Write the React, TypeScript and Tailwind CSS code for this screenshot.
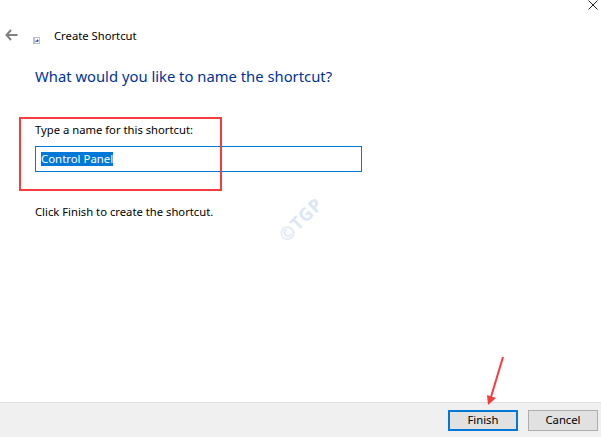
import React from 'react';

const font = "font-['Noto_Sans','Open_Sans',sans-serif]";

function ShortcutIcon() {
  return (
    <svg width="7" height="7" viewBox="0 0 7 7" className="mt-[5px]">
      <rect x="0" y="0" width="7" height="7" fill="#b8c2d2" />
      <rect x="2" y="1" width="4" height="5" fill="#ffffff" />
      <path d="M2.5 5.5 L2.5 3.5 L4 3.5 L4 2 L6 4 L4 5 L3.5 4.5 Z" fill="#1f4f9e" />
    </svg>
  );
}

export default function App() {
  return (
    <div className={`relative flex h-[437px] w-[601px] flex-col overflow-hidden bg-white text-[11.25px] text-black ${font}`}>
      <div className="flex justify-end pr-[3px]">
        <svg width="10" height="10" viewBox="0 0 10 10" className="block">
          <path d="M0.5 0.5 L9.5 9.5 M9.5 0.5 L0.5 9.5" stroke="#222" strokeWidth="1" fill="none" />
        </svg>
      </div>

      <div className="mt-[9px] flex h-[30px] items-center pl-[5px] pt-[7px]">
        <svg width="13" height="12" viewBox="0 0 13 12" className="mb-[5px]">
          <path d="M6 1 L1.5 6 L6 11 M1.5 6 L12.5 6" stroke="#808080" strokeWidth="2" fill="none" />
        </svg>
        <div className="ml-[15px]"><ShortcutIcon /></div>
        <span className="ml-[14px] mb-[3px] leading-[16px]">Create Shortcut</span>
      </div>

      <div className="flex flex-1 flex-col pl-[35px]">
        <h1 className="mt-[17px] text-[14.8px] font-normal leading-[20px] text-[#003399]">What would you like to name the shortcut?</h1>
        <label className="mt-[36px] leading-[16px]">Type a name for this shortcut:</label>
        <div className="mt-[8px] flex h-[26px] w-[327px] items-center border border-[#0078d7] pl-[5px]">
          <span className="bg-[#0078d7] text-[11.4px] leading-[14px] text-white">Control Panel</span>
        </div>
        <p className="mt-[32px] leading-[16px]">Click Finish to create the shortcut.</p>
      </div>

      <div className="flex h-[35px] items-center justify-end gap-[10px] border-t border-[#dfdfdf] bg-[#f0f0f0] pr-[3px]">
        <button className="h-[21px] w-[70px] border-2 border-[#0078d7] bg-[#e1e1e1] text-[11.25px] leading-none">Finish</button>
        <button className="h-[21px] w-[70px] border border-[#adadad] bg-[#e1e1e1] text-[11.25px] leading-none">Cancel</button>
      </div>

      <div className="absolute left-[19px] top-[117px] h-[74px] w-[203px] border-[2px] border-[#f53d3d]" />

      <div className="absolute left-[274px] top-[206px] -rotate-45 text-[18px] font-bold tracking-[1px] text-[#dbe7f5]">©TGP</div>

      <svg className="absolute left-[480px] top-[355px]" width="26" height="52" viewBox="0 0 26 52">
        <path d="M23 2 L11 42" stroke="#f53d3d" strokeWidth="2" fill="none" />
        <path d="M7 40 L8 50 L16 43 Z" fill="#f53d3d" />
      </svg>
    </div>
  );
}
